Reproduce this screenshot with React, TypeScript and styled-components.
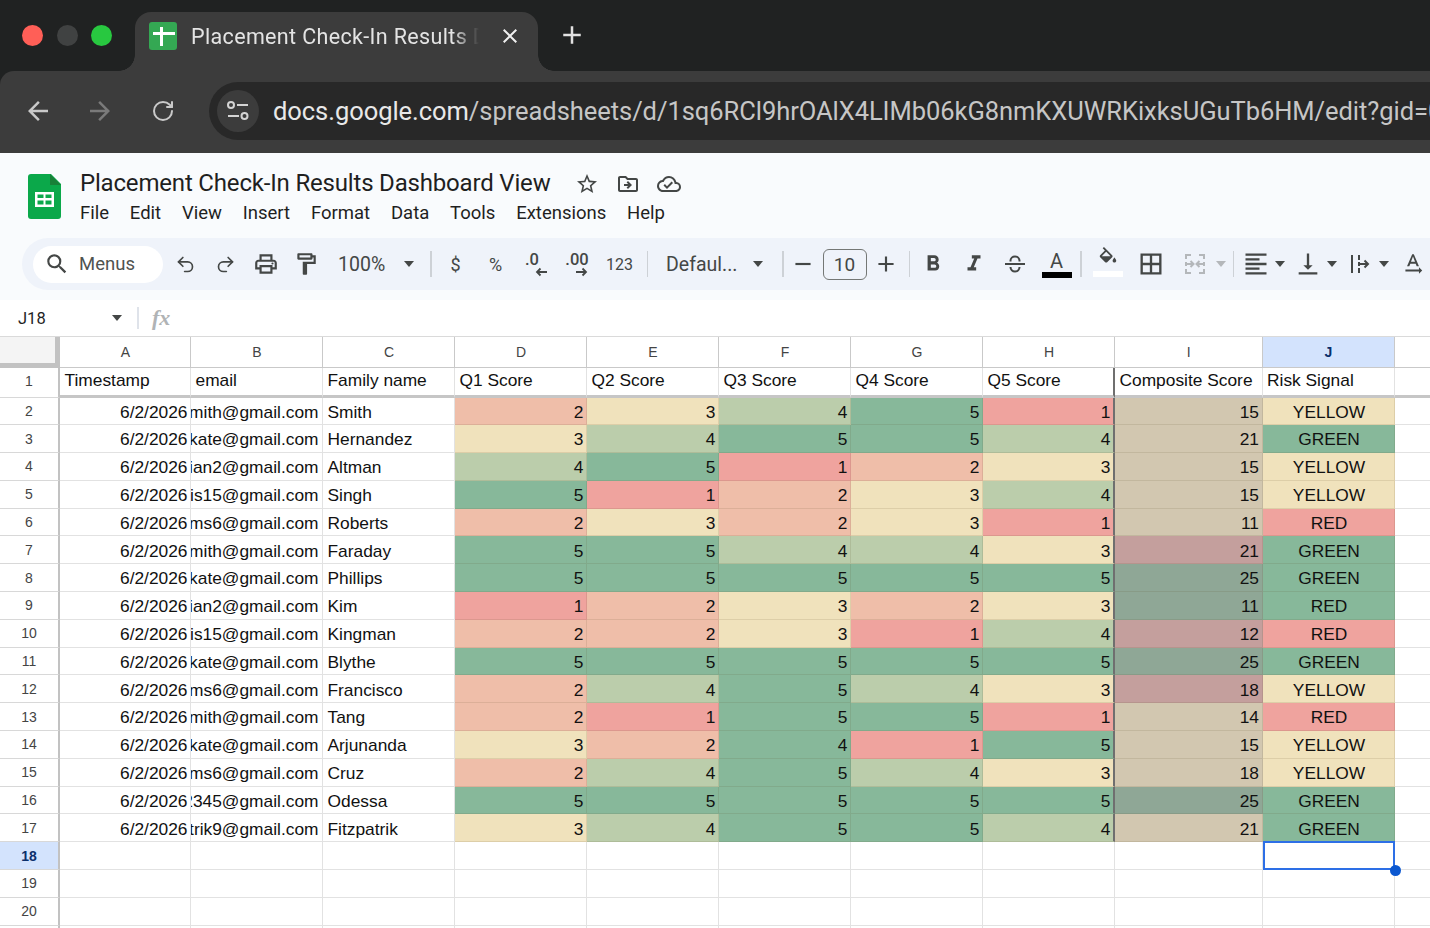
import React from "react";
import styled, { createGlobalStyle } from "styled-components";
import {
  MdArrowBack, MdArrowForward, MdClose, MdAdd, MdRemove, MdSearch, MdOutlinePrint, MdOutlineFormatPaint,
  MdFormatBold, MdFormatItalic, MdBorderAll, MdFormatAlignLeft,
  MdVerticalAlignBottom, MdTextRotationNone, MdStarBorder, MdOutlineDriveFileMove, MdOutlineCloudDone,
} from "react-icons/md";
import { Undo2, Redo2, RotateCw } from "lucide-react";

const Global = createGlobalStyle`
  html, body { margin: 0; padding: 0; width: 1430px; height: 928px; overflow: hidden; background: #fff; }
  * { box-sizing: border-box; }
`;
const Page = styled.div`
  width: 1430px; height: 928px; overflow: hidden; display: flex; flex-direction: column; background: #202222;
  font-family: Roboto, "Liberation Sans", sans-serif;
`;
const TabStrip = styled.div`
  height: 71px; flex: none; background: #202222; display: flex; align-items: flex-end;
`;
const Lights = styled.div`
  width: 135px; height: 71px; flex: none; display: flex; align-items: center; gap: 13.5px; padding: 0 0 0 22px;
`;
const Light = styled.span<{ $c: string }>`
  width: 21px; height: 21px; border-radius: 50%; background: ${p => p.$c}; flex: none;
`;
const Tab = styled.div`
  position: relative; width: 403px; height: 59px; flex: none; background: #3c3c3c; border-radius: 16px 16px 0 0;
  display: flex; align-items: center; padding: 0 0 12px 14px; color: #e4e4e4;
  &::before, &::after {
    content: ""; position: absolute; bottom: 0; width: 16px; height: 16px;
  }
  &::before {
    left: -16px;
    background: radial-gradient(circle at 0 0, transparent 15.5px, #3c3c3c 16px);
  }
  &::after {
    right: -16px;
    background: radial-gradient(circle at 100% 0, transparent 15.5px, #3c3c3c 16px);
  }
`;
const Favicon = styled.span`
  width: 28px; height: 28px; border-radius: 3px; background: #34a853; flex: none; display: flex;
`;
const TabTitle = styled.span`
  margin: 1px 0 0 14px; width: 292px; font-size: 21.5px; letter-spacing: 0.35px; white-space: nowrap; overflow: hidden; flex: none;
  -webkit-mask-image: linear-gradient(90deg, #000 262px, transparent 288px);
  mask-image: linear-gradient(90deg, #000 262px, transparent 288px);
`;
const TabClose = styled.span`
  margin-left: 15px; display: flex; color: #f0f0f0; font-size: 24px;
`;
const NewTab = styled.span`
  margin: 0 0 21px 19px; display: flex; color: #e2e2e2; font-size: 30px;
`;
const ChromeBar = styled.div`
  height: 82px; flex: none; background: #3c3c3c; border-radius: 14px 0 0 0; display: flex; padding: 11px 0 13px 0;
`;
const NavIcon = styled.span<{ $w: number; $dim?: boolean }>`
  width: ${p => p.$w}px; flex: none; display: flex; align-items: center; justify-content: center;
  font-size: 30px; color: ${p => (p.$dim ? "#7a7a7a" : "#c9c9c9")};
`;
const Omnibox = styled.div`
  flex: 1; min-width: 0; height: 58px; margin-left: 7px; background: #282828; border-radius: 29px 0 0 29px;
  display: flex; align-items: center; padding-left: 8px; overflow: hidden;
`;
const SiteChip = styled.span`
  width: 42px; height: 42px; border-radius: 50%; background: #3c3c3c; flex: none; display: flex;
  align-items: center; justify-content: center;
`;
const Url = styled.span`
  margin-left: 14px; font-size: 25.5px; color: #c6c6c6; white-space: nowrap; letter-spacing: -0.05px;
  & b { font-weight: 400; color: #e8e8e8; }
`;
const DocHead = styled.div`
  height: 85px; flex: none; background: #f9fbfd; display: flex; padding: 19px 0 0 28px;
`;
const DocLogo = styled.svg`
  width: 33px; height: 45px; flex: none; margin-top: 2px;
`;
const DocMeta = styled.div`
  margin-left: 19px; display: flex; flex-direction: column;
`;
const TitleRow = styled.div`
  display: flex; align-items: center; height: 21px;
`;
const DocTitle = styled.span`
  font-size: 24px; color: #1f1f1f; white-space: nowrap; letter-spacing: -0.18px; width: 486px; flex: none;
`;
const HeadIcon = styled.span`
  width: 41px; flex: none; display: flex; justify-content: center; font-size: 24px; color: #444746; margin-top: 3px;
`;
const MenuRow = styled.div`
  display: flex; gap: 20.8px; margin-top: 9px; font-size: 18.5px; color: #1f1f1f;
`;
const ToolStrip = styled.div`
  height: 62px; flex: none; background: #f9fbfd; padding: 0 0 10px 22px;
`;
const Tools = styled.div`
  height: 52px; background: #eff3fa; border-radius: 26px 0 0 26px; display: flex; align-items: center;
  padding-left: 11px; overflow: hidden; color: #444746;
`;
const SearchPill = styled.div`
  width: 130px; height: 37px; flex: none; margin-right: 2px; background: #fff; border-radius: 19px; display: flex;
  align-items: center; padding-left: 11px; font-size: 18.5px; color: #4f5350; gap: 9px;
`;
const Tool = styled.span<{ $w?: number; $size?: number; $faded?: boolean }>`
  width: ${p => p.$w ?? 40}px; height: 36px; flex: none; display: flex; align-items: center; justify-content: center;
  font-size: ${p => p.$size ?? 26}px; color: ${p => (p.$faded ? "#b4b7ba" : "#444746")};
`;
const TextTool = styled(Tool)`
  font-size: ${p => p.$size ?? 18}px;
`;
const Caret = styled.span<{ $ml?: number; $faded?: boolean }>`
  flex: none; width: 0; height: 0; margin-left: ${p => p.$ml ?? 0}px;
  border-left: 5.5px solid transparent; border-right: 5.5px solid transparent;
  border-top: 6px solid ${p => (p.$faded ? "#b4b7ba" : "#444746")};
`;
const Sep = styled.span<{ $l: number; $r: number }>`
  width: 1.5px; height: 26px; flex: none; background: #cdd1d6; margin: 0 ${p => p.$r}px 0 ${p => p.$l}px;
`;
const DropText = styled.span<{ $w: number; $ml?: number }>`
  width: ${p => p.$w}px; flex: none; margin-left: ${p => p.$ml ?? 0}px; font-size: 19.5px; color: #444746; white-space: nowrap;
`;
const SizeBox = styled.span`
  width: 44px; height: 31px; flex: none; border: 1.5px solid #747775; border-radius: 6px; display: flex; align-items: center;
  justify-content: center; font-size: 19px; color: #444746;
`;
const Stack = styled.span`
  display: flex; flex-direction: column; align-items: flex-start; font-size: 16.5px; font-weight: 500; line-height: 15px; color: #444746;
`;
const Nudge = styled.span<{ $ml: number }>`
  display: flex; margin-left: ${p => p.$ml}px;
`;
const ColorA = styled.span`
  display: flex; flex-direction: column; align-items: center; font-size: 20px; line-height: 22px; color: #444746;
`;
const ColorBar = styled.span<{ $c: string }>`
  width: 30px; height: 5.5px; background: ${p => p.$c}; display: block; flex: none;
`;
const FillStack = styled.span`
  display: flex; flex-direction: column; align-items: center; gap: 2px; height: 36px; padding-top: 1px;
`;
const FormulaBar = styled.div`
  height: 37px; flex: none; background: #fff; border-bottom: 1.5px solid #dadada; display: flex; align-items: center;
`;
const NameBox = styled.span`
  width: 137px; flex: none; display: flex; align-items: center; padding: 0 15px 0 18px; font-size: 16.5px; color: #1f1f1f; justify-content: space-between;
`;
const FxSep = styled.span`
  width: 2px; height: 22px; background: #dfe3ea; flex: none;
`;
const Fx = styled.span`
  margin-left: 13px; font-family: "Liberation Serif", serif; font-style: italic; font-weight: 700; font-size: 22px; color: #b0b3b5;
`;
const Sheet = styled.div`
  flex: 1; min-height: 0; background: #fff; display: grid; overflow: hidden;
  grid-template-columns: 60px 131px 132px 132px 132px 132px 132px 132px 132px 147.5px 132px 36px;
  grid-template-rows: 31px 29.5px repeat(20, 27.8px);
  font-family: "Liberation Sans", Arial, sans-serif;
`;
const Corner = styled.div`
  background: #f4f4f4; border-right: 5px solid #c2c2c2; border-bottom: 5px solid #c2c2c2;
`;
const ColHead = styled.div<{ $on?: boolean }>`
  display: flex; align-items: center; justify-content: center; font-size: 14px; padding-left: 1px;
  background: ${p => (p.$on ? "#d3e3fd" : "#fff")}; color: ${p => (p.$on ? "#0b2f6b" : "#444")}; font-weight: ${p => (p.$on ? 700 : 400)};
  border-right: 1.5px solid #c9c9c9; border-bottom: 1.5px solid #c9c9c9;
`;
const RowHead = styled.div<{ $on?: boolean; $top?: boolean }>`
  display: flex; align-items: center; justify-content: center; font-size: 14px;
  padding-bottom: ${p => (p.$top ? 2 : 0)}px;
  background: ${p => (p.$on ? "#d3e3fd" : "#fff")}; color: ${p => (p.$on ? "#0b2f6b" : "#444")}; font-weight: ${p => (p.$on ? 700 : 400)};
  border-right: 2.5px solid #c2c2c2; border-bottom: 1.5px solid #d8d8d8;
`;
const Cell = styled.div<{ $bg?: string; $align?: string; $head?: boolean; $dark?: boolean }>`
  position: relative; display: flex; align-items: center; min-width: 0; overflow: hidden; font-size: 17.35px; color: #111; white-space: nowrap;
  justify-content: ${p => p.$align ?? "flex-start"};
  padding: ${p => (p.$head ? "0 3px 1px 4.5px" : "2.5px 2.5px 0 4.5px")};
  background: ${p => p.$bg ?? "#fff"};
  border-right: ${p => (p.$dark ? "2px solid #6f6f6f" : p.$bg ? "1.5px solid rgba(90,80,40,.13)" : "1.5px solid #e2e2e2")};
  border-bottom: ${p => (p.$head ? "3.5px solid #c6c6c6" : p.$bg ? "1.5px solid rgba(90,80,40,.13)" : "1.5px solid #e2e2e2")};
`;
const EmailCell = styled(Cell)`
  padding-left: 0; padding-right: 3.5px;
`;
const SelectedCell = styled(Cell)`
  overflow: visible;
`;
const SelectBox = styled.span`
  position: absolute; left: 0; right: -1px; top: -1px; bottom: -1px; border: 2.5px solid #2d6fe6; z-index: 2;
`;
const Handle = styled.span`
  position: absolute; right: -7px; bottom: -7px; width: 11px; height: 11px; border-radius: 50%; background: #0b57d0; z-index: 3;
`;

const SCORE: Record<number, string> = { 1: "#efa39e", 2: "#efbea9", 3: "#f0e2bc", 4: "#bbcdab", 5: "#87b89a" };
const TAN = "#d2c7b0", PINK = "#c49f9d", GG = "#8fa796";
const RISK: Record<string, string> = { YELLOW: "#f0e2bc", GREEN: "#87b89a", RED: "#efa39e" };

type Row = { email: string; name: string; q: number[]; total: number; totalBg: string; risk: string; riskBg?: string; greenQ3?: boolean };
const rows: Row[] = [
  { email: "jsmith", name: "Smith", q: [2, 3, 4, 5, 1], total: 15, totalBg: TAN, risk: "YELLOW" },
  { email: "kate", name: "Hernandez", q: [3, 4, 5, 5, 4], total: 21, totalBg: TAN, risk: "GREEN" },
  { email: "ian2", name: "Altman", q: [4, 5, 1, 2, 3], total: 15, totalBg: TAN, risk: "YELLOW" },
  { email: "is15", name: "Singh", q: [5, 1, 2, 3, 4], total: 15, totalBg: TAN, risk: "YELLOW" },
  { email: "ms6", name: "Roberts", q: [2, 3, 2, 3, 1], total: 11, totalBg: TAN, risk: "RED" },
  { email: "jsmith", name: "Faraday", q: [5, 5, 4, 4, 3], total: 21, totalBg: PINK, risk: "GREEN" },
  { email: "kate", name: "Phillips", q: [5, 5, 5, 5, 5], total: 25, totalBg: GG, risk: "GREEN" },
  { email: "ian2", name: "Kim", q: [1, 2, 3, 2, 3], total: 11, totalBg: GG, risk: "RED", riskBg: RISK.GREEN },
  { email: "is15", name: "Kingman", q: [2, 2, 3, 1, 4], total: 12, totalBg: PINK, risk: "RED" },
  { email: "kate", name: "Blythe", q: [5, 5, 5, 5, 5], total: 25, totalBg: GG, risk: "GREEN" },
  { email: "ms6", name: "Francisco", q: [2, 4, 5, 4, 3], total: 18, totalBg: PINK, risk: "YELLOW" },
  { email: "jsmith", name: "Tang", q: [2, 1, 5, 5, 1], total: 14, totalBg: TAN, risk: "RED" },
  { email: "kate", name: "Arjunanda", q: [3, 2, 4, 1, 5], total: 15, totalBg: TAN, risk: "YELLOW", greenQ3: true },
  { email: "ms6", name: "Cruz", q: [2, 4, 5, 4, 3], total: 18, totalBg: TAN, risk: "YELLOW" },
  { email: "12345", name: "Odessa", q: [5, 5, 5, 5, 5], total: 25, totalBg: GG, risk: "GREEN" },
  { email: "patrik9", name: "Fitzpatrik", q: [3, 4, 5, 5, 4], total: 21, totalBg: TAN, risk: "GREEN" },
];
const letters = ["A", "B", "C", "D", "E", "F", "G", "H", "I", "J"];
const heads = ["Timestamp", "email", "Family name", "Q1 Score", "Q2 Score", "Q3 Score", "Q4 Score", "Q5 Score", "Composite Score", "Risk Signal"];
const menus = ["File", "Edit", "View", "Insert", "Format", "Data", "Tools", "Extensions", "Help"];

const ShortArrow = ({ left, ml }: { left?: boolean; ml: number }) => (
  <Nudge $ml={ml}>
    <svg width="12" height="10" viewBox="0 0 12 10" fill="none" stroke="#444746" strokeWidth="1.8">
      {left ? <path d="M12 5H2M5.500 1.500 2 5l3.500 3.500" /> : <path d="M0 5h10M6.500 1.500 10 5 6.500 8.500" />}
    </svg>
  </Nudge>
);
const MergeIcon = () => (
  <svg width="22" height="24" viewBox="0 0 22 24" fill="none" stroke="#b4b7ba" strokeWidth="2">
    <path d="M7 3H2v4M2 10v4M2 17v4h5M15 3h5v4M20 10v4M20 17v4h-5" />
    <path d="M3 12h6M6.500 9 9.500 12l-3 3M19 12h-6M15.500 9 12.500 12l3 3" />
  </svg>
);
const WrapIcon = () => (
  <svg width="22" height="24" viewBox="0 0 22 24" fill="none" stroke="#444746" strokeWidth="2">
    <path d="M3 3v18M10 3v5M10 10v4M10 16v5M10 12h9M15.500 8.500 19 12l-3.500 3.500" />
  </svg>
);
const StrikeIcon = () => (
  <svg width="24" height="24" viewBox="0 0 24 24" fill="none" stroke="#444746" strokeWidth="2">
    <path d="M7.500 9.500V8.500a4.500 4 0 0 1 9 0v1M2 12h20M7.500 15a4.500 4.500 0 0 0 9 0" />
  </svg>
);
const BucketIcon = () => (
  <svg width="22" height="22" viewBox="0 0 24 24" fill="#444746">
    <path d="M16.560 8.940 7.620 0 6.210 1.410l2.380 2.380-5.150 5.150c-.59.59-.59 1.540 0 2.120l5.500 5.500c.29.29.68.44 1.060.44s.77-.15 1.060-.44l5.500-5.500c.59-.58.59-1.530 0-2.120zM5.210 10 10 5.210 14.790 10H5.210zM19 11.500s-2 2.170-2 3.500c0 1.100.9 2 2 2s2-.9 2-2c0-1.330-2-3.500-2-3.500z" />
  </svg>
);

export default function App() {
  return (
    <Page>
      <Global />
      <TabStrip>
        <Lights>
          <Light $c="#ff5f57" />
          <Light $c="#404242" />
          <Light $c="#28c840" />
        </Lights>
        <Tab>
          <Favicon>
            <svg width="28" height="28" viewBox="0 0 28 28" fill="#fff"><path d="M11 5h3v5h12v3H14v11h-3V13H4v-3h7z" /></svg>
          </Favicon>
          <TabTitle>Placement Check-In Results Dashboard View</TabTitle>
          <TabClose><MdClose /></TabClose>
        </Tab>
        <NewTab><MdAdd /></NewTab>
      </TabStrip>
      <ChromeBar>
        <NavIcon $w={76}><MdArrowBack /></NavIcon>
        <NavIcon $w={48} $dim><MdArrowForward /></NavIcon>
        <NavIcon $w={78}><RotateCw size={24} strokeWidth={2} /></NavIcon>
        <Omnibox>
          <SiteChip>
            <svg width="24" height="22" viewBox="0 0 24 22" fill="none" stroke="#d4d4d4" strokeWidth="2">
              <circle cx="5" cy="5" r="3" /><path d="M11 5h11M2 16h11" /><circle cx="18.500" cy="16" r="3" />
            </svg>
          </SiteChip>
          <Url><b>docs.google.com</b>/spreadsheets/d/1sq6RCl9hrOAlX4LIMb06kG8nmKXUWRKixksUGuTb6HM/edit?gid=0#gid=0</Url>
        </Omnibox>
      </ChromeBar>
      <DocHead>
        <DocLogo viewBox="0 0 33 45">
          <path d="M3 0h20l10 10v32a3 3 0 0 1-3 3H3a3 3 0 0 1-3-3V3a3 3 0 0 1 3-3z" fill="#0ba84a" />
          <path d="M22 0l11 11H22z" fill="#188038" />
          <path d="M7 18h19v15H7z M9.500 20.500v3.500h6v-3.500z M17.500 20.500v3.500h6v-3.500z M9.500 26.500v4h6v-4z M17.500 26.500v4h6v-4z" fill="#fff" fillRule="evenodd" />
        </DocLogo>
        <DocMeta>
          <TitleRow>
            <DocTitle>Placement Check-In Results Dashboard View</DocTitle>
            <HeadIcon><MdStarBorder /></HeadIcon>
            <HeadIcon><MdOutlineDriveFileMove /></HeadIcon>
            <HeadIcon><MdOutlineCloudDone /></HeadIcon>
          </TitleRow>
          <MenuRow>{menus.map(m => <span key={m}>{m}</span>)}</MenuRow>
        </DocMeta>
      </DocHead>
      <ToolStrip>
        <Tools>
          <SearchPill><MdSearch size={26} color="#444746" />Menus</SearchPill>
          <Tool><Undo2 size={21} strokeWidth={1.9} /></Tool>
          <Tool $w={41}><Redo2 size={21} strokeWidth={1.9} /></Tool>
          <Tool><MdOutlinePrint /></Tool>
          <Tool><MdOutlineFormatPaint /></Tool>
          <DropText $w={66} $ml={12}>100%</DropText>
          <Caret />
          <Sep $l={16} $r={4} />
          <TextTool>$</TextTool>
          <TextTool>%</TextTool>
          <Tool $w={41}><Stack>.0<ShortArrow left ml={10} /></Stack></Tool>
          <Tool $w={41}><Stack>.00<ShortArrow ml={11} /></Stack></Tool>
          <TextTool $w={44} $size={16}>123</TextTool>
          <Sep $l={5} $r={18} />
          <DropText $w={87}>Defaul...</DropText>
          <Caret />
          <Sep $l={19} $r={0} />
          <Tool $w={39}><MdRemove /></Tool>
          <SizeBox>10</SizeBox>
          <Tool $w={38}><MdAdd /></Tool>
          <Sep $l={4} $r={3} />
          <Tool $w={40} $size={26}><MdFormatBold /></Tool>
          <Tool $w={41} $size={26}><MdFormatItalic /></Tool>
          <Tool $w={42}><StrikeIcon /></Tool>
          <Tool $w={41}><ColorA>A<ColorBar $c="#000" /></ColorA></Tool>
          <Sep $l={3} $r={6} />
          <Tool $w={40}><FillStack><BucketIcon /><ColorBar $c="#fff" /></FillStack></Tool>
          <Tool $w={47} $size={28}><MdBorderAll /></Tool>
          <Tool $w={41} $faded><MergeIcon /></Tool>
          <Caret $faded />
          <Sep $l={7} $r={3} />
          <Tool $w={38} $size={28}><MdFormatAlignLeft /></Tool>
          <Caret />
          <Tool $w={46} $size={28}><MdVerticalAlignBottom /></Tool>
          <Caret $ml={-4} />
          <Tool $w={46}><WrapIcon /></Tool>
          <Caret $ml={-4} />
          <Tool $w={48}><MdTextRotationNone /></Tool>
        </Tools>
      </ToolStrip>
      <FormulaBar>
        <NameBox>J18<Caret /></NameBox>
        <FxSep />
        <Fx>fx</Fx>
      </FormulaBar>
      <Sheet>
        <Corner />
        {letters.map(l => <ColHead key={l} $on={l === "J"}>{l}</ColHead>)}
        <ColHead />
        <RowHead $top>1</RowHead>
        {heads.map((h, i) => <Cell key={h} $head $dark={i === 7}>{h}</Cell>)}
        <Cell $head />
        {rows.map((r, i) => (
          <React.Fragment key={i}>
            <RowHead>{i + 2}</RowHead>
            <Cell $align="flex-end">6/2/2026</Cell>
            <EmailCell $align="flex-end">{r.email}@gmail.com</EmailCell>
            <Cell>{r.name}</Cell>
            {r.q.map((s, j) => (
              <Cell key={j} $bg={r.greenQ3 && j === 2 ? SCORE[5] : SCORE[s]} $align="flex-end" $dark={j === 4}>{s}</Cell>
            ))}
            <Cell $bg={r.totalBg} $align="flex-end">{r.total}</Cell>
            <Cell $bg={r.riskBg ?? RISK[r.risk]} $align="center">{r.risk}</Cell>
            <Cell />
          </React.Fragment>
        ))}
        {[18, 19, 20, 21].map(n => (
          <React.Fragment key={n}>
            <RowHead $on={n === 18}>{n === 21 ? "" : n}</RowHead>
            {letters.map(l =>
              n === 18 && l === "J" ? (
                <SelectedCell key={l}><SelectBox /><Handle /></SelectedCell>
              ) : (
                <Cell key={l} />
              )
            )}
            <Cell />
          </React.Fragment>
        ))}
      </Sheet>
    </Page>
  );
}
